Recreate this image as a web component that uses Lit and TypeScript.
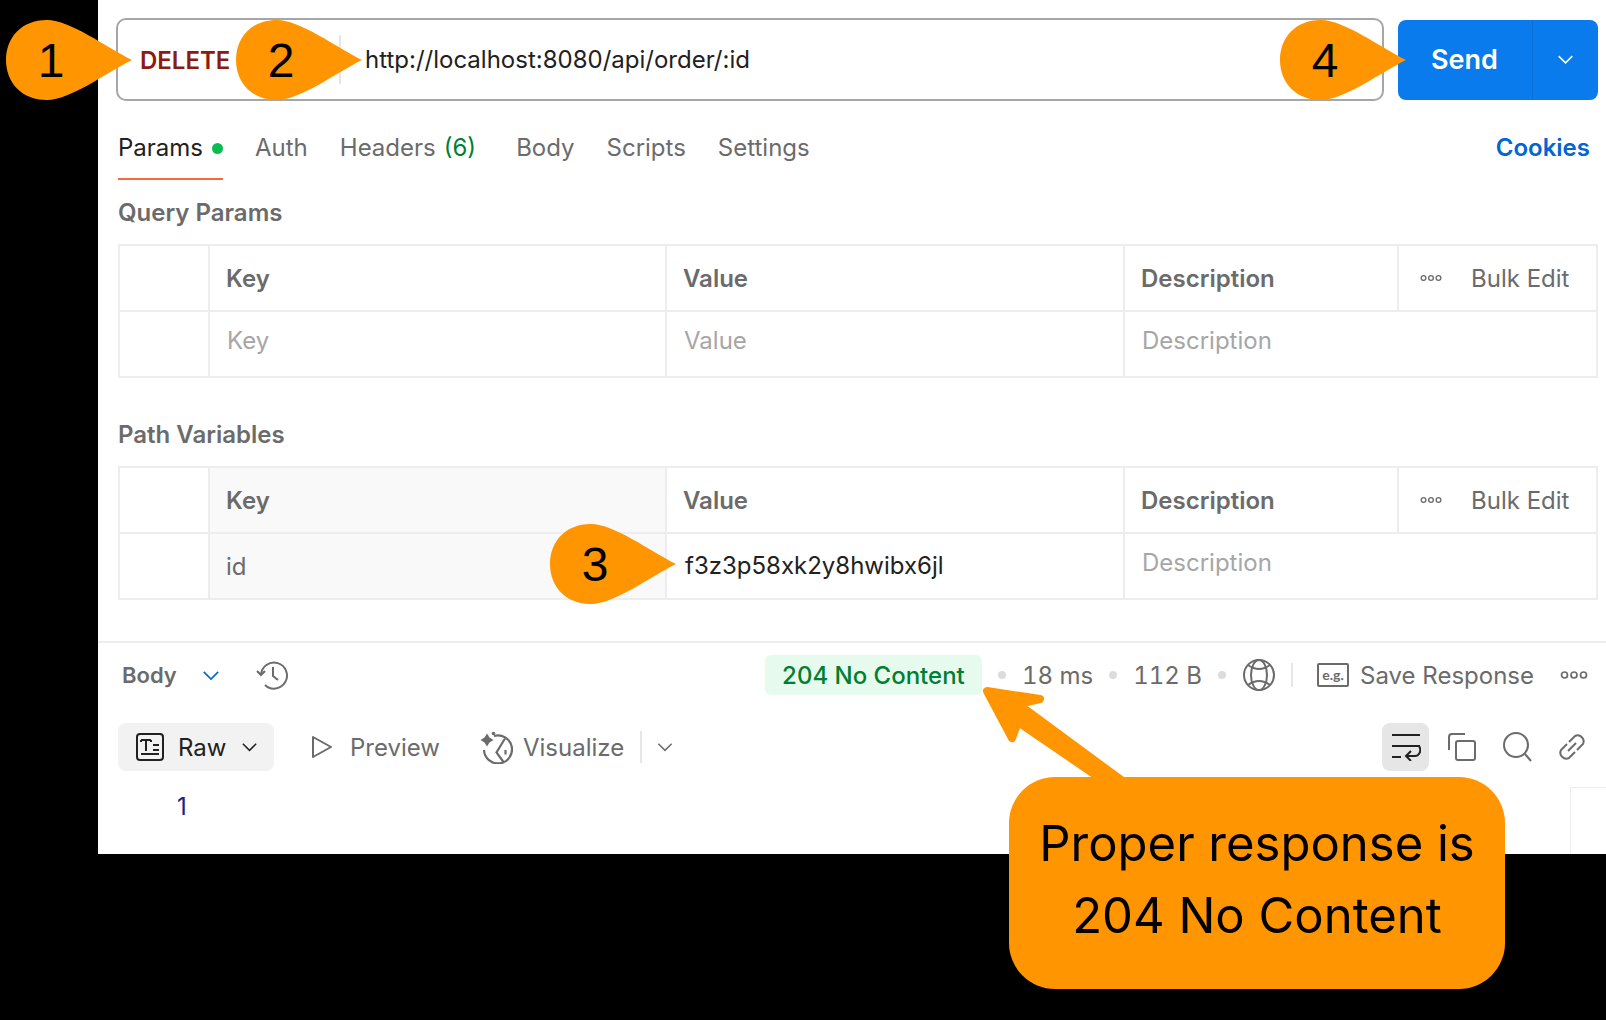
import { LitElement, html, css, svg } from 'lit';
import { customElement } from 'lit/decorators.js';

const chevron = (cls: string) => html`<svg class=${cls} viewBox="0 0 20 12" fill="none" stroke="currentColor" stroke-width="1.8"><path d="M2 2l8 8 8-8" /></svg>`;

const dots = html`<svg class="dots" viewBox="0 0 28 10" fill="none" stroke="currentColor" stroke-width="1.7"><circle cx="4.5" cy="5" r="3" /><circle cx="14" cy="5" r="3" /><circle cx="23.5" cy="5" r="3" /></svg>`;

const drop = svg`<path d="M41 0C64 0 100 27 126 40C100 53 64 80 41 80C15 80 0 62 0 40C0 18 15 0 41 0Z" fill="#ff9500" />`;

@customElement('app-root')
export class AppRoot extends LitElement {
	static styles = css`
		:host {
			display: block;
			position: relative;
			width: 1606px;
			height: 1020px;
			background: #000;
			overflow: hidden;
			font-family: Inter, 'Liberation Sans', sans-serif;
			font-size: 24px;
			color: #6b6b6b;
		}
		svg {
			display: block;
			flex: none;
		}
		.panel {
			margin-left: 98px;
			height: 854px;
			background: #fff;
			box-sizing: border-box;
			padding-top: 18px;
			overflow: hidden;
		}
		.url-row {
			display: flex;
			align-items: center;
			gap: 14px;
			padding-left: 18px;
		}
		.url-box {
			display: flex;
			align-items: center;
			box-sizing: border-box;
			width: 1268px;
			height: 83px;
			border: 2px solid #a6a6a6;
			border-radius: 10px;
		}
		.method {
			width: 221px;
			padding: 2px 0 0 22px;
			box-sizing: border-box;
			font-size: 24px;
			font-weight: 600;
			color: #8e1a10;
		}
		.url-sep {
			width: 2px;
			height: 49px;
			background: #e6e6e6;
		}
		.url {
			margin-left: 24px;
			color: #212121;
		}
		.send {
			display: flex;
			align-items: center;
			width: 200px;
			height: 80px;
			border-radius: 8px;
			background: #097bed;
			color: #fff;
			font-weight: 600;
			font-size: 27px;
		}
		.send-label {
			flex: 1;
			text-align: center;
			padding-right: 1px;
		}
		.send-more {
			display: flex;
			align-items: center;
			justify-content: center;
			width: 65px;
			height: 100%;
			border-left: 1px solid #0a6fd4;
		}
		.chev-send {
			width: 17px;
			height: 11px;
		}
		.tabs {
			display: flex;
			margin: 30px 8px 0 20px;
			height: 49px;
		}
		.tab {
			box-sizing: border-box;
			height: 49px;
			line-height: 34px;
			margin-right: 32px;
			border-bottom: 2px solid transparent;
			white-space: nowrap;
		}
		.tab.on {
			display: flex;
			gap: 9px;
			width: 105px;
			margin-right: 32px;
			color: #212121;
			border-bottom-color: #f26b3a;
		}
		.tab.wide {
			margin-right: 40px;
		}
		.tab-dot {
			width: 11px;
			height: 11px;
			margin-top: 12px;
			border-radius: 50%;
			background: #0cbb52;
		}
		.count {
			color: #007f31;
			margin-left: 8px;
		}
		.cookies {
			margin-left: auto;
			line-height: 34px;
			font-weight: 600;
			color: #0265d2;
			padding-right: 8px;
		}
		.heading {
			margin-left: 20px;
			height: 26px;
			line-height: 26px;
			font-size: 24px;
			font-weight: 600;
		}
		.heading.first {
			margin-top: 20px;
		}
		.heading.second {
			margin-top: 44px;
		}
		.table {
			display: grid;
			grid-template-columns: 90px 457px 458px 274px 199px;
			grid-auto-rows: 66px;
			box-sizing: border-box;
			margin: 18px 0 0 20px;
			width: 1480px;
			border-top: 2px solid #ededed;
			border-left: 2px solid #ededed;
		}
		.cell {
			display: flex;
			align-items: center;
			box-sizing: border-box;
			padding-left: 16px;
			border-right: 2px solid #ededed;
			border-bottom: 2px solid #ededed;
			white-space: nowrap;
		}
		.cell.head {
			font-weight: 600;
		}
		.cell.hint {
			color: #a6a6a6;
			padding: 0 0 8px 17px;
		}
		.cell.span {
			grid-column: span 2;
		}
		.cell.locked {
			background: #f9f9f9;
		}
		.cell.filled {
			color: #212121;
			padding: 0 0 2px 18px;
		}
		.cell.bulk {
			font-weight: 400;
			padding-left: 21px;
			gap: 29px;
		}
		.dots {
			width: 22px;
			height: 8px;
			color: #6b6b6b;
		}
		.divider {
			margin-top: 41px;
			height: 2px;
			background: #ededed;
		}
		.bar {
			display: flex;
			align-items: center;
			height: 64px;
			padding: 0 18px 0 24px;
		}
		.bar-title {
			width: 80px;
			font-size: 22px;
			font-weight: 600;
		}
		.chev-blue {
			width: 18px;
			height: 11px;
			color: #0265d2;
		}
		.history {
			width: 34px;
			height: 34px;
			margin-left: 35px;
			margin-right: auto;
		}
		.badge {
			display: flex;
			align-items: center;
			justify-content: center;
			width: 217px;
			height: 40px;
			border-radius: 6px;
			background: #e7faee;
			color: #007f31;
			font-weight: 500;
		}
		.meta {
			font-variant-numeric: tabular-nums;
		}
		.sep-dot {
			width: 8px;
			height: 8px;
			margin: 0 16px;
			border-radius: 50%;
			background: #dcdcdc;
		}
		.globe {
			width: 34px;
			height: 34px;
		}
		.bar-sep {
			width: 2px;
			height: 24px;
			margin: 0 24px 0 15px;
			background: #e6e6e6;
		}
		.eg {
			width: 32px;
			height: 24px;
			margin-right: 11px;
		}
		.bar .dots {
			width: 28px;
			height: 10px;
			margin-left: 26px;
		}
		.views {
			display: flex;
			align-items: center;
			height: 48px;
			margin: 16px 0 0 20px;
			padding-right: 19px;
		}
		.raw {
			display: flex;
			align-items: center;
			box-sizing: border-box;
			width: 156px;
			height: 48px;
			padding-left: 18px;
			border-radius: 8px;
			background: #f2f2f2;
			color: #212121;
		}
		.raw-icon {
			width: 28px;
			height: 28px;
			margin-right: 14px;
		}
		.chev-dark {
			width: 17px;
			height: 10px;
			margin-left: 15px;
			color: #212121;
		}
		.view-item {
			display: flex;
			align-items: center;
		}
		.play {
			width: 22px;
			height: 24px;
			margin: 0 17px 0 37px;
		}
		.wand {
			width: 34px;
			height: 34px;
			margin: 0 10px 0 39px;
		}
		.view-sep {
			width: 2px;
			height: 32px;
			margin: 0 14px 0 16px;
			background: #e6e6e6;
		}
		.chev-view {
			width: 18px;
			height: 10px;
		}
		.tools {
			display: flex;
			align-items: center;
			margin-left: auto;
		}
		.wrap {
			display: flex;
			align-items: center;
			justify-content: center;
			width: 47px;
			height: 48px;
			border-radius: 8px;
			background: #e6e6e6;
		}
		.wrap svg {
			width: 30px;
			height: 28px;
		}
		.tool {
			width: 30px;
			height: 30px;
			margin-left: 25px;
		}
		.tool.copy {
			margin-left: 18px;
		}
		.editor {
			display: flex;
			margin-top: 16px;
			height: 67px;
		}
		.line {
			margin: 7px 0 0 79px;
			height: 26px;
			line-height: 26px;
			font-size: 24px;
			color: #1a237e;
		}
		.minimap {
			margin-left: auto;
			width: 35px;
			border-top: 1px solid #ededed;
			border-left: 1px solid #ededed;
		}
		.pin {
			position: absolute;
			width: 126px;
			height: 80px;
		}
		.pin svg {
			width: 126px;
			height: 80px;
		}
		.pin span {
			position: absolute;
			left: 0;
			top: 1px;
			width: 90px;
			line-height: 80px;
			text-align: center;
			font-family: 'Liberation Sans', Arial, sans-serif;
			font-size: 48px;
			color: #000;
		}
		.p1 {
			left: 6px;
			top: 20px;
		}
		.p2 {
			left: 236px;
			top: 20px;
		}
		.p3 {
			left: 550px;
			top: 524px;
		}
		.p4 {
			left: 1280px;
			top: 20px;
		}
		.arrow {
			position: absolute;
			left: 970px;
			top: 675px;
			width: 170px;
			height: 120px;
		}
		.bubble {
			position: absolute;
			left: 1009px;
			top: 777px;
			display: flex;
			flex-direction: column;
			align-items: center;
			justify-content: center;
			width: 496px;
			height: 212px;
			border-radius: 46px;
			background: #ff9500;
			color: #000;
			font-size: 49px;
			font-weight: 420;
			line-height: 72px;
			padding-bottom: 7px;
			box-sizing: border-box;
		}
	`;

	renderTable(path: boolean) {
		return html`<div class="table">
			<div class="cell"></div>
			<div class="cell head ${path ? 'locked' : ''}">Key</div>
			<div class="cell head">Value</div>
			<div class="cell head">Description</div>
			<div class="cell bulk">${dots}<span>Bulk Edit</span></div>
			<div class="cell"></div>
			${path
				? html`<div class="cell locked">id</div>
						<div class="cell filled">f3z3p58xk2y8hwibx6jl</div>`
				: html`<div class="cell hint">Key</div>
						<div class="cell hint">Value</div>`}
			<div class="cell hint span">Description</div>
		</div>`;
	}

	render() {
		return html`
			<div class="panel">
				<div class="url-row">
					<div class="url-box">
						<div class="method">DELETE</div>
						<div class="url-sep"></div>
						<div class="url">http://localhost:8080/api/order/:id</div>
					</div>
					<div class="send">
						<div class="send-label">Send</div>
						<div class="send-more">${chevron('chev-send')}</div>
					</div>
				</div>

				<div class="tabs">
					<div class="tab on">Params<span class="tab-dot"></span></div>
					<div class="tab">Auth</div>
					<div class="tab wide">Headers<span class="count">(6)</span></div>
					<div class="tab">Body</div>
					<div class="tab">Scripts</div>
					<div class="tab">Settings</div>
					<div class="cookies">Cookies</div>
				</div>

				<div class="heading first">Query Params</div>
				${this.renderTable(false)}
				<div class="heading second">Path Variables</div>
				${this.renderTable(true)}

				<div class="divider"></div>
				<div class="bar">
					<div class="bar-title">Body</div>
					${chevron('chev-blue')}
					<svg class="history" viewBox="0 0 34 34" fill="none" stroke="#6b6b6b" stroke-width="2">
						<path d="M6 17a13 13 0 1 1 4 10" />
						<path d="M2 13l4 4 4-4" />
						<path d="M18 9v9l5 4" />
					</svg>
					<div class="badge">204 No Content</div>
					<span class="sep-dot"></span>
					<span class="meta">18 ms</span>
					<span class="sep-dot"></span>
					<span class="meta">112 B</span>
					<span class="sep-dot"></span>
					<svg class="globe" viewBox="0 0 34 34" fill="none" stroke="#6b6b6b" stroke-width="2">
						<circle cx="17" cy="17" r="15" />
						<ellipse cx="17" cy="17" rx="8" ry="15" />
						<path d="M6 7Q17 15 28 7M6 27Q17 19 28 27" />
					</svg>
					<span class="bar-sep"></span>
					<svg class="eg" viewBox="0 0 32 24" fill="none" stroke="#6b6b6b" stroke-width="2">
						<rect x="1" y="1" width="30" height="22" rx="1" />
						<text x="16" y="16.5" text-anchor="middle" font-family="Lato, sans-serif" font-size="14" font-weight="700" fill="#6b6b6b" stroke="none">e.g.</text>
					</svg>
					<span>Save Response</span>
					${dots}
				</div>

				<div class="views">
					<div class="raw">
						<svg class="raw-icon" viewBox="0 0 28 28" fill="none" stroke="#212121" stroke-width="2">
							<rect x="1" y="1" width="26" height="26" rx="3" />
							<path d="M5 7h10M5 9V7M15 9V7M10 7v11M5 21h18M17 12h6M17 17h6" />
						</svg>
						<span>Raw</span>
						${chevron('chev-dark')}
					</div>
					<div class="view-item">
						<svg class="play" viewBox="0 0 22 24" fill="none" stroke="#6b6b6b" stroke-width="2" stroke-linejoin="round"><path d="M2 2l18 10L2 22z" /></svg>
						<span>Preview</span>
					</div>
					<div class="view-item">
						<svg class="wand" viewBox="0 0 34 34" fill="none" stroke="#6b6b6b" stroke-width="2.2">
							<path d="M15 6A14 14 0 1 1 5 20" />
							<path d="M26 8.5L17.5 22.5L24.5 32" />
							<path d="M26.5 20v4.5" />
							<path d="M8 3.5l2.5 4 4 2.5-4 2.5-2.5 4-2.5-4-4-2.5 4-2.5z" fill="#6b6b6b" stroke="none" />
							<circle cx="14.5" cy="3.5" r="1.8" fill="#6b6b6b" stroke="none" />
						</svg>
						<span>Visualize</span>
					</div>
					<span class="view-sep"></span>
					${chevron('chev-view')}
					<div class="tools">
						<div class="wrap">
							<svg viewBox="0 0 30 28" fill="none" stroke="#212121" stroke-width="2">
								<path d="M1 2h28M1 13h28M1 24h9" />
								<path d="M28 13c3 5 0 10-4 10H15M20 18l-5 5 5 5" />
							</svg>
						</div>
						<svg class="tool copy" viewBox="0 0 30 30" fill="none" stroke="#6b6b6b" stroke-width="2">
							<rect x="9" y="9" width="19" height="19" rx="2" />
							<path d="M2 18V5a3 3 0 0 1 3-3h13" />
						</svg>
						<svg class="tool" viewBox="0 0 30 30" fill="none" stroke="#6b6b6b" stroke-width="2">
							<circle cx="14" cy="13" r="12" />
							<path d="M23 22l6 7" />
						</svg>
						<svg class="tool" viewBox="0 0 30 30" fill="none" stroke="#6b6b6b" stroke-width="2">
							<path d="M12 10l6-6a6 6 0 0 1 8 8l-6 6" />
							<path d="M18 20l-6 6a6 6 0 0 1-8-8l6-6" />
							<path d="M11 19l8-8" />
						</svg>
					</div>
				</div>

				<div class="editor">
					<div class="line">1</div>
					<div class="minimap"></div>
				</div>
			</div>

			<svg class="arrow" viewBox="970 675 170 120" fill="#ff9500" stroke="#ff9500" stroke-width="8" stroke-linejoin="round">
				<path d="M987 691L1040 699L1018 704L1128 785L1110 785L1018 722L1012 738Z" />
			</svg>

			<div class="pin p1"><svg viewBox="0 0 126 80">${drop}</svg><span>1</span></div>
			<div class="pin p2"><svg viewBox="0 0 126 80">${drop}</svg><span>2</span></div>
			<div class="pin p3"><svg viewBox="0 0 126 80">${drop}</svg><span>3</span></div>
			<div class="pin p4"><svg viewBox="0 0 126 80">${drop}</svg><span>4</span></div>

			<div class="bubble">
				<div>Proper response is</div>
				<div>204 No Content</div>
			</div>
		`;
	}
}
